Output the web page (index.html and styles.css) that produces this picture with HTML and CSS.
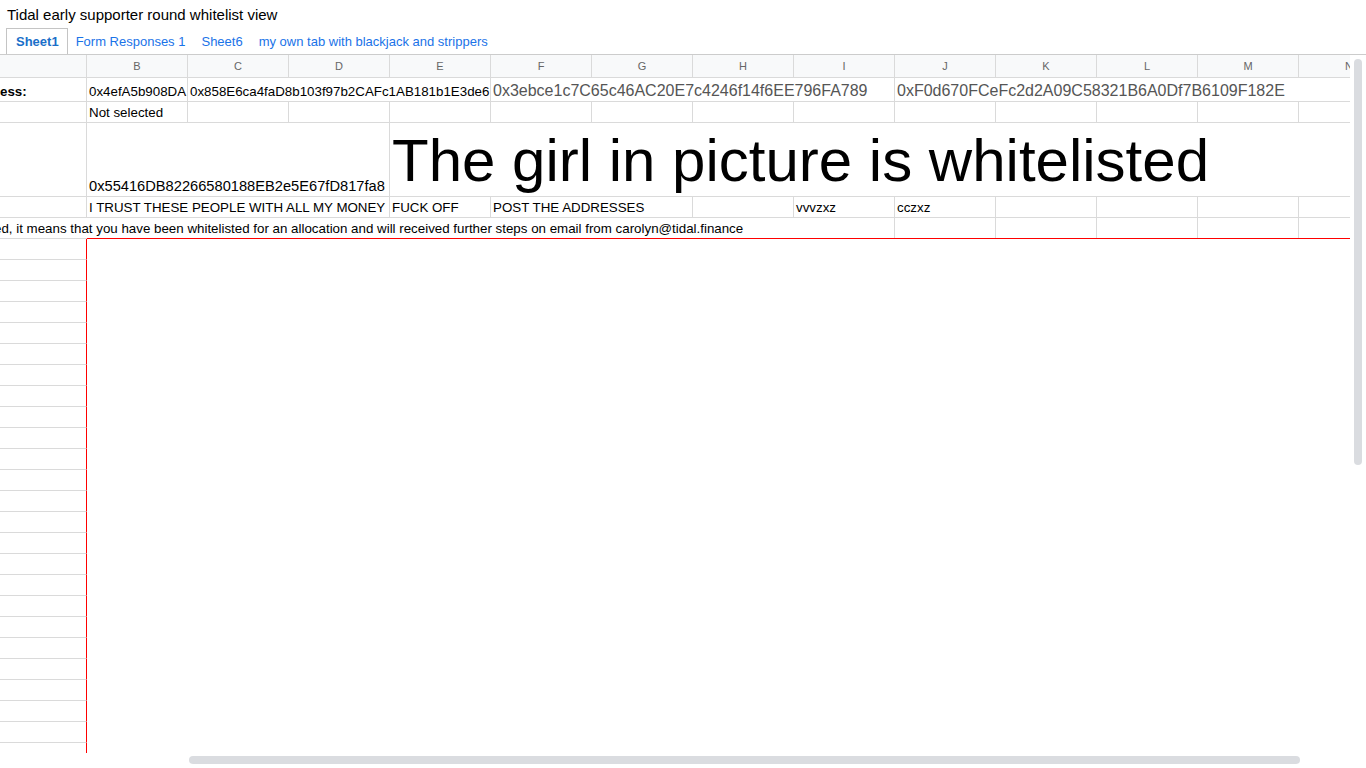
FILE: index.html
```html
<!DOCTYPE html>
<html lang="en">
<head>
<meta charset="utf-8">
<title>Tidal early supporter round whitelist view</title>
<link rel="stylesheet" href="styles.css">
</head>
<body>
<div class="doc-title">Tidal early supporter round whitelist view</div>
<div class="tabs">
  <div class="tab active">Sheet1</div>
  <div class="tab">Form Responses 1</div>
  <div class="tab">Sheet6</div>
  <div class="tab">my own tab with blackjack and strippers</div>
</div>
<div class="sheet">
  <div class="viewport">
    <div class="grid">
      <div class="cell hdr"></div>
      <div class="cell hdr">B</div>
      <div class="cell hdr">C</div>
      <div class="cell hdr">D</div>
      <div class="cell hdr">E</div>
      <div class="cell hdr">F</div>
      <div class="cell hdr">G</div>
      <div class="cell hdr">H</div>
      <div class="cell hdr">I</div>
      <div class="cell hdr">J</div>
      <div class="cell hdr">K</div>
      <div class="cell hdr">L</div>
      <div class="cell hdr">M</div>
      <div class="cell hdr">N</div>

      <div class="cell cut bold">ess:</div>
      <div class="cell">0x4efA5b908DA</div>
      <div class="cell span3">0x858E6ca4faD8b103f97b2CAFc1AB181b1E3de6</div>
      <div class="cell span4 big16">0x3ebce1c7C65c46AC20E7c4246f14f6EE796FA789</div>
      <div class="cell span5 big16">0xF0d670FCeFc2d2A09C58321B6A0Df7B6109F182E</div>

      <div class="cell"></div>
      <div class="cell">Not selected</div>
      <div class="cell"></div>
      <div class="cell"></div>
      <div class="cell"></div>
      <div class="cell"></div>
      <div class="cell"></div>
      <div class="cell"></div>
      <div class="cell"></div>
      <div class="cell"></div>
      <div class="cell"></div>
      <div class="cell"></div>
      <div class="cell"></div>
      <div class="cell"></div>

      <div class="cell"></div>
      <div class="cell span3 mid">0x55416DB82266580188EB2e5E67fD817fa8</div>
      <div class="cell span10 huge">The girl in picture is whitelisted</div>

      <div class="cell"></div>
      <div class="cell span3">I TRUST THESE PEOPLE WITH ALL MY MONEY</div>
      <div class="cell">FUCK OFF</div>
      <div class="cell span2">POST THE ADDRESSES</div>
      <div class="cell"></div>
      <div class="cell">vvvzxz</div>
      <div class="cell">cczxz</div>
      <div class="cell"></div>
      <div class="cell"></div>
      <div class="cell"></div>
      <div class="cell"></div>

      <div class="cell span9 cut note">ed, it means that you have been whitelisted for an allocation and will received further steps on email from carolyn@tidal.finance</div>
      <div class="cell"></div>
      <div class="cell"></div>
      <div class="cell"></div>
      <div class="cell"></div>
      <div class="cell"></div>

      <div class="frozen"></div>
      <div class="cell rowa"></div><div class="cell rowa"></div><div class="cell rowa"></div><div class="cell rowa"></div>
      <div class="cell rowa"></div><div class="cell rowa"></div><div class="cell rowa"></div><div class="cell rowa"></div>
      <div class="cell rowa"></div><div class="cell rowa"></div><div class="cell rowa"></div><div class="cell rowa"></div>
      <div class="cell rowa"></div><div class="cell rowa"></div><div class="cell rowa"></div><div class="cell rowa"></div>
      <div class="cell rowa"></div><div class="cell rowa"></div><div class="cell rowa"></div><div class="cell rowa"></div>
      <div class="cell rowa"></div><div class="cell rowa"></div><div class="cell rowa"></div><div class="cell rowa"></div>
      <div class="cell rowa"></div>
    </div>
  </div>
  <div class="vscroll"><div class="vthumb"></div></div>
</div>
<div class="hscroll"><div class="hthumb"></div></div>
</body>
</html>
```
FILE: styles.css
```css
html, body {
  margin: 0;
  padding: 0;
  background: #fff;
  font-family: "Liberation Sans", Arial, sans-serif;
  overflow: hidden;
}

.doc-title {
  height: 28px;
  box-sizing: border-box;
  padding: 6px 0 0 7px;
  font-size: 15px;
  line-height: 18px;
  color: #000;
}

.tabs {
  display: flex;
  height: 27px;
  box-sizing: border-box;
  border-bottom: 1px solid #cccccc;
  padding-left: 6px;
}

.tab {
  padding: 1px 8px 0;
  font-size: 13px;
  line-height: 25px;
  color: #1a73e8;
}

.tab.active {
  font-weight: bold;
  color: #1a6fc9;
  border: 1px solid #c4c4c4;
  border-bottom: none;
  padding: 0 8px 0 9px;
}

.sheet {
  display: flex;
  height: 698px;
}

.viewport {
  width: 1350px;
  overflow: hidden;
}

.grid {
  display: grid;
  width: 1400px;
  grid-template-columns: 87px repeat(13, 101px);
  grid-template-rows: 23px 24px 21px 74px 21px 21px repeat(25, 21px);
}

.cell {
  box-sizing: border-box;
  border-right: 1px solid #dadada;
  border-bottom: 1px solid #dadada;
  padding: 0 2px 1px;
  font-size: 13.33px;
  line-height: 16px;
  color: #000;
  white-space: nowrap;
  overflow: hidden;
  display: flex;
  align-items: flex-end;
}

.hdr {
  background: #f8f9fa;
  color: #666;
  font-size: 11px;
  justify-content: center;
  align-items: center;
  padding: 0;
}

.cut {
  padding-left: 0;
}

.note {
  text-indent: -6px;
}

.bold {
  font-weight: bold;
}

.span2 { grid-column: span 2; }
.span3 { grid-column: span 3; }
.span4 { grid-column: span 4; }
.span5 { grid-column: span 5; }
.span9 { grid-column: span 9; }
.span10 { grid-column: span 10; }

.big16 {
  font-size: 16px;
  line-height: 19px;
  color: #555;
}

.mid {
  font-size: 14.67px;
  line-height: 17px;
}

.huge {
  font-size: 60px;
  line-height: 60px;
  padding-bottom: 5px;
}

.rowa {
  grid-column: 1;
  border-right: 1px solid #ff0000;
}

.frozen {
  grid-column: 2 / -1;
  grid-row: 7 / span 25;
  border-top: 1px solid #ff0000;
  margin-top: -1px;
  background: #fff;
}

.vscroll {
  width: 16px;
  padding-top: 4px;
  box-sizing: border-box;
}

.vthumb {
  margin-left: 4px;
  width: 8px;
  height: 406px;
  border-radius: 4px;
  background: #dadce0;
}

.hscroll {
  padding-top: 3px;
}

.hthumb {
  margin-left: 189px;
  width: 1111px;
  height: 8px;
  border-radius: 4px;
  background: #dadce0;
}
```
